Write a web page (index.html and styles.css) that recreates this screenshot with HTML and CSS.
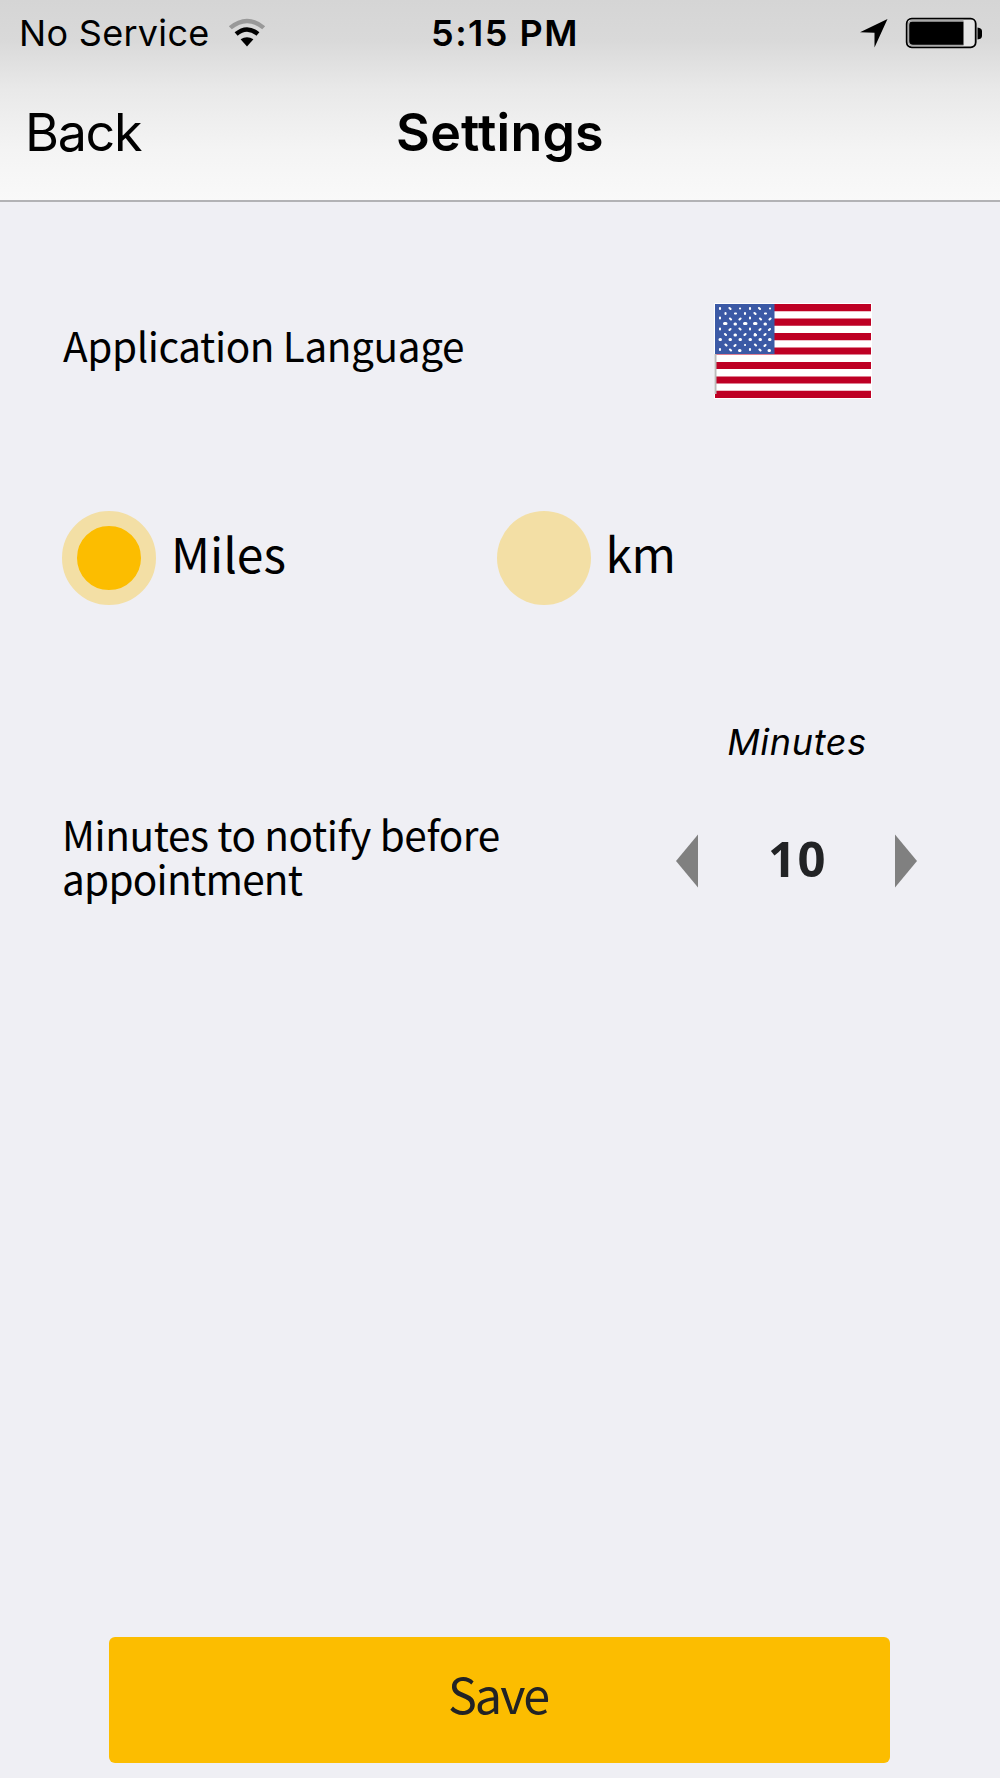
FILE: index.html
```html
<!DOCTYPE html>
<html lang="en">
<head>
<meta charset="UTF-8">
<meta name="viewport" content="width=device-width, initial-scale=1.0">
<title>Settings</title>
<link rel="stylesheet" href="styles.css">
</head>
<body>

<header class="header">
  <div class="status-bar">
    <div class="status-left">
      <span class="carrier">No Service</span>
      <svg class="wifi" width="40" height="30" viewBox="0 0 40 30">
        <path d="M1.8 8.2Q20-6.8 38.200 8.2L35.200 11.200Q20-.8 4.800 11.200Z" fill="#999"/>
        <path d="M7.600 14.300Q20 4 32.400 14.300L29.400 17.700Q20 9.600 10.600 17.700Z"/>
        <path d="M13.600 21.200Q20 17.200 26.400 21.200L20 28.500Z"/>
      </svg>
    </div>
    <span class="time">5:15 PM</span>
    <div class="status-right">
      <svg width="30" height="30" viewBox="0 0 30 30">
        <path d="M28.500 1L15.500 29.500V14.800L1 14.200Z"/>
      </svg>
      <svg width="80" height="32" viewBox="0 0 80 32">
        <rect x="1.700" y="1.700" width="69" height="28.600" rx="5" fill="#e6e6e6" stroke="#000" stroke-width="1.800"/>
        <path d="M58.500 4.500V28H7Q4 28 4 25V7.500Q4 4.500 7 4.500Z"/>
        <path d="M58.500 3.500H8Q3.500 3.500 3.500 8V24Q3.500 28.500 8 28.500H58.500" fill="none" stroke="#aaa" stroke-width="1.500"/>
        <path d="M72.500 10.500Q77 11 77 14V19Q77 22 72.500 22.500Z"/>
      </svg>
    </div>
  </div>
  <nav class="nav-bar">
    <a class="back">Back</a>
    <h1 class="title">Settings</h1>
  </nav>
</header>

<main class="settings">
  <section class="language">
    <span class="label app-language">Application Language</span>
    <svg class="flag" width="158" height="96" viewBox="0 0 158 96">
      <rect width="158" height="96" rx="1" fill="#fff"/>
      <path d="M1 4.600H157M1 19.100H157M1 33.600H157M1 48H157M1 62.500H157M1 77H157M1 91.400H157" stroke="#be0024" stroke-width="7.200"/>
      <path d="M1.500 51V91" stroke="#bbb" stroke-width="2"/>
      <rect x="1" y="1" width="59.500" height="50" fill="#3b59a5"/>
      <g fill="none" stroke="#fff" stroke-linecap="round">
        <path stroke-width="2.100" d="M6 5v1M15.500 5l1 1M26 5.500h.1M36 5v1M45 5l1 1M56 5.500h.1M11.500 10v1M21 10.500h1M31 10v1M40.500 10l1 1M51 10.500h1M6 14.500v1M16 15.500l1 1M26.500 15.500l-1 1M36 14.500v1M46 15.500l1 1M56.500 15.500l-1 1M6 25.500v1M16.500 26l-1 1M25.500 25.500l1 1M36 25.500v1M46.500 26l-1 1M56 26l-1 1M11 31l1 1M31.500 31l-1 1M41 31l1 1M51.500 31l-1 1M11.500 41.500l1 1M21.500 42l-1 1M31 42h.1M41 41.500l1 1M51.500 42l-1 1M6 46v1M16 46.500l1 1M36 46v1M45.500 46.500l1 1"/>
        <path stroke-width="3" d="M10.500 20.500h1.500M21 21h.5M30.500 20.500h1.500M40.500 20.500h1.500M51 21h.5M21 32h.5M41 32h.1M6 36.500h.5M16 36.500h.5M26 36.500h.5M36 36.500h.5M46 36.500h.5M55.500 36.500h.5M25.500 47.500h.5M55 47.500h.5"/>
      </g>
    </svg>
  </section>

  <section class="units">
    <label class="unit">
      <span class="radio checked"></span>
      <span class="unit-name">Miles</span>
    </label>
    <label class="unit">
      <span class="radio"></span>
      <span class="unit-name km">km</span>
    </label>
  </section>

  <section class="notify">
    <p class="label notify-label">Minutes to notify before <span class="line-two">appointment</span></p>
    <div class="picker">
      <span class="picker-caption">Minutes</span>
      <div class="stepper">
        <svg width="22" height="54" viewBox="0 0 22 54"><path d="M22 .5V53.500L0 27Z"/></svg>
        <span class="value">10</span>
        <svg width="22" height="54" viewBox="0 0 22 54"><path d="M0 .5V53.500L22 27Z"/></svg>
      </div>
    </div>
  </section>

  <button class="save">Save</button>
</main>

</body>
</html>
```
FILE: styles.css
```css
* {
  box-sizing: border-box;
  padding: 0;
  margin: 0;
}

body {
  width: 1000px;
  height: 1778px;
  display: flex;
  flex-direction: column;
  overflow: hidden;
  background: #efeff4;
  color: #000;
  font-family: "Noto Sans CJK SC", "Noto Sans", sans-serif;
}

svg {
  display: block;
  flex: none;
}

.header {
  height: 202px;
  border-bottom: 2px solid #b2b2b5;
  background: linear-gradient(#d5d5d5, #d9d9d9 20%, #e9e9e9 45%, #f4f4f4 75%, #f9f9f9);
  font-family: Inter, "Liberation Sans", sans-serif;
}

.status-bar {
  height: 66px;
  padding: 0 15px 0 19px;
  display: grid;
  grid-template-columns: 1fr auto 1fr;
  align-items: center;
  font-size: 36px;
  line-height: 66px;
}

.status-left {
  display: flex;
  align-items: center;
  gap: 17px;
}

.carrier {
  letter-spacing: 0.3px;
}

.time {
  padding-left: 6px;
  font-weight: 600;
  letter-spacing: 1.5px;
}

.status-right {
  display: flex;
  justify-content: flex-end;
  align-items: center;
  gap: 16px;
}

.nav-bar {
  height: 134px;
  padding: 0 25px;
  display: grid;
  grid-template-columns: 1fr auto 1fr;
  font-size: 52px;
  line-height: 133px;
}

.back {
  letter-spacing: -1.3px;
}

.title {
  font-size: 52px;
  font-weight: 600;
  letter-spacing: 0.2px;
}

.settings {
  flex: 1;
  display: flex;
  flex-direction: column;
}

.label {
  font-size: 40.5px;
  line-height: 44px;
  letter-spacing: -0.4px;
}

.language {
  margin-top: 101px;
  padding: 0 128px 0 63px;
  display: flex;
  justify-content: space-between;
}

.app-language {
  margin-top: 20px;
}

.units {
  margin-top: 111.5px;
  padding-left: 62px;
  display: flex;
}

.unit {
  width: 434.5px;
  display: flex;
  gap: 15px;
}

.radio {
  width: 94px;
  height: 94px;
  border-radius: 50%;
  background: #f3dfa5;
}

.radio.checked {
  border: 15.5px solid #f3dfa5;
  background: #fcbd00;
}

.unit-name {
  font-size: 48px;
  line-height: 82px;
}

.km {
  letter-spacing: -0.5px;
}

.notify {
  margin-top: 112.5px;
  padding: 0 83px 0 62px;
  display: flex;
  justify-content: space-between;
}

.notify-label {
  width: 460px;
  margin-top: 94.5px;
}

.line-two {
  letter-spacing: -0.75px;
}

.picker {
  width: 241px;
  display: flex;
  flex-direction: column;
  align-items: center;
}

.picker-caption {
  padding-left: 1px;
  font: italic 36px/50px Inter, "Liberation Sans", sans-serif;
  letter-spacing: 0.65px;
}

.stepper {
  width: 100%;
  margin-top: 67px;
  display: flex;
  justify-content: space-between;
  align-items: center;
  fill: #808080;
}

.value {
  padding: 0 0 6px 2px;
  color: #222325;
  font: 700 49px/48px "Noto Sans", "Open Sans", sans-serif;
  letter-spacing: 1.5px;
}

.save {
  width: 781px;
  height: 126px;
  margin: auto auto 15px 109px;
  padding: 0 3px 13px 0;
  border: 0;
  border-radius: 6px;
  background: #fcbd00;
  color: #222325;
  font: 48.5px/113px "Noto Sans CJK SC", "Noto Sans", sans-serif;
  letter-spacing: -2px;
}
```
